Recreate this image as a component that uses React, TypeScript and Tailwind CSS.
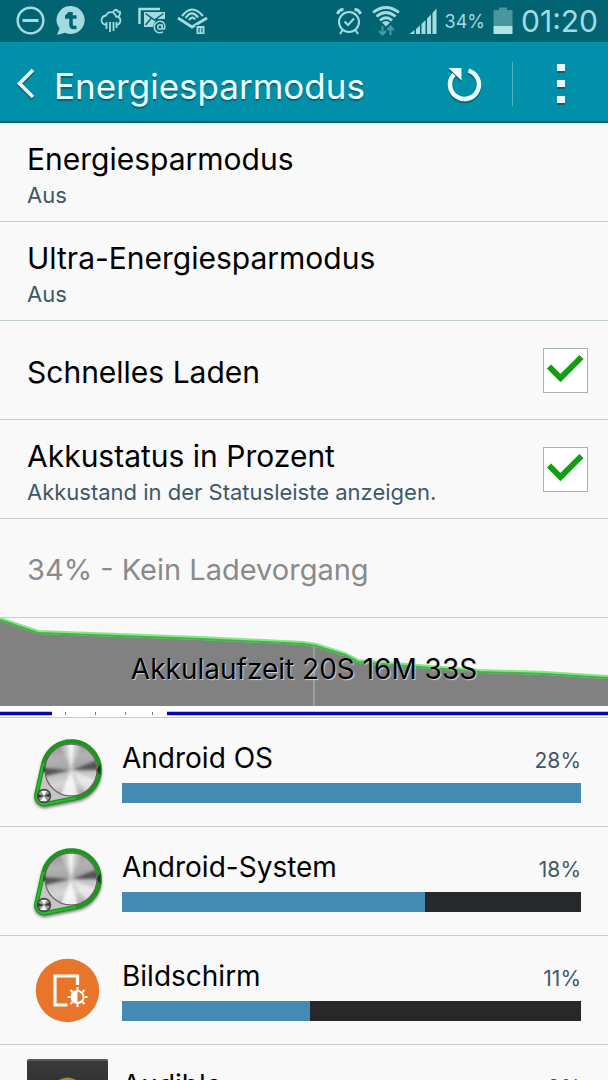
import React from 'react';

interface SettingRowProps {
  title: string;
  subtitle?: string;
  checkbox?: boolean;
}

const settings: SettingRowProps[] = [
  { title: 'Energiesparmodus', subtitle: 'Aus' },
  { title: 'Ultra-Energiesparmodus', subtitle: 'Aus' },
  { title: 'Schnelles Laden', checkbox: true },
  { title: 'Akkustatus in Prozent', subtitle: 'Akkustand in der Statusleiste anzeigen.', checkbox: true },
];

const SettingText: React.FC<SettingRowProps> = ({ title, subtitle }) => (
  <span className={subtitle ? 'flex flex-col pt-2.5' : 'flex flex-col pt-1'}>
    <span className="text-[30px] leading-9 text-black">{title}</span>
    {subtitle && <span className="text-[22px] leading-9 text-[#3d5867]">{subtitle}</span>}
  </span>
);

const SettingRow: React.FC<SettingRowProps> = ({ title, subtitle, checkbox }) => {
  const [checked, setChecked] = React.useState(true);
  const rowClass = 'flex w-full h-[98px] items-center justify-between pl-[27px] pr-5 text-left';

  return (
    <li className="border-b border-[#c3ced3]">
      {checkbox ? (
        <label className={rowClass}>
          <SettingText title={title} subtitle={subtitle} />
          <span className="grid shrink-0">
            <input
              type="checkbox"
              checked={checked}
              onChange={() => setChecked(!checked)}
              className="[grid-area:1/1] appearance-none w-[45px] h-[45px] bg-white border border-[#a5b3b8]"
            />
            {checked && (
              <svg viewBox="0 0 45 45" className="[grid-area:1/1] w-[45px] h-[45px] pointer-events-none">
                <path d="M6 18.500 L17.500 30 L38.500 9" fill="none" stroke="#12a012" strokeWidth="6" />
              </svg>
            )}
          </span>
        </label>
      ) : (
        <button type="button" className={rowClass}>
          <SettingText title={title} subtitle={subtitle} />
        </button>
      )}
    </li>
  );
};

const SystemIcon: React.FC = () => (
  <svg viewBox="0 0 81 81" className="w-full">
    <defs>
      <linearGradient id="metal" x1="0" y1="0" x2="0.15" y2="1">
        <stop offset="0" stopColor="#8f8f8f" />
        <stop offset="0.3" stopColor="#b2b2b2" />
        <stop offset="0.48" stopColor="#a8a8a8" />
        <stop offset="0.55" stopColor="#b8b8b8" />
        <stop offset="0.8" stopColor="#d6d6d6" />
        <stop offset="1" stopColor="#b5b5b5" />
      </linearGradient>
      <filter id="soft" x="-30%" y="-30%" width="160%" height="160%">
        <feGaussianBlur stdDeviation="1.8" />
      </filter>
      <clipPath id="disc">
        <circle cx="44" cy="38" r="25.500" />
      </clipPath>
    </defs>
    <path
      d="M16.500 31 A28.500 28.500 0 1 1 49 66 L19 72 A8 8 0 0 1 9.500 62.500 Z"
      transform="translate(0 2)"
      fill="#555"
      stroke="#555"
      strokeWidth="4"
      opacity="0.8"
      filter="url(#soft)"
    />
    <path
      d="M16.500 31 A28.500 28.500 0 1 1 49 66 L19 72 A8 8 0 0 1 9.500 62.500 Z"
      fill="#c4c6c4"
      stroke="#1c961f"
      strokeWidth="4.500"
      strokeLinejoin="round"
    />
    <path
      d="M16.500 31 A28.500 28.500 0 0 0 16.500 31 L9.500 62.500 A8 8 0 0 0 19 72 L49 66"
      fill="none"
      stroke="#2bb930"
      strokeWidth="2"
      strokeLinejoin="round"
    />
    <circle cx="44" cy="38" r="26" fill="url(#metal)" />
    <g clipPath="url(#disc)">
      <g filter="url(#soft)">
        <path d="M44 38 L32 8 L56 8 Z" fill="#dedede" opacity="0.6" />
        <path d="M44 38 L40 8 L48 8 Z" fill="#fff" opacity="0.8" />
        <path d="M44 38 L14 36 L14 45 Z" fill="#333" opacity="0.75" />
        <path d="M44 38 L74 27 L74 38 Z" fill="#333" opacity="0.75" />
        <path d="M44 38 L32 68 L52 68 Z" fill="#fff" opacity="0.8" />
        <path d="M44 38 L72 50 L62 64 Z" fill="#fff" opacity="0.5" />
      </g>
    </g>
    <path d="M16.500 34 V41 L19.500 38 Z M73.500 32 V43 L69 38 Z" fill="#143d16" />
    <circle cx="44" cy="38" r="26" fill="none" stroke="#6a5a62" strokeWidth="1.200" />
    <circle cx="17" cy="64" r="6.500" fill="#9a9a9a" stroke="#4a4a4a" strokeWidth="1.500" />
    <path d="M17 64 L14 59 L20 59 Z M17 64 L13 69 L20 69 Z" fill="#f4f4f4" />
    <path d="M17 64 L11 62 V66 Z M17 64 L23 61 V65 Z" fill="#3a3a3a" />
  </svg>
);

const DisplayIcon: React.FC = () => (
  <svg viewBox="0 0 81 81" className="w-full" fill="none" stroke="#fff">
    <circle cx="40.500" cy="40.500" r="31.700" fill="#e8752a" stroke="none" />
    <path d="M40.500 55 H28 V26 H50.500 V35" strokeWidth="3.200" />
    <circle cx="50.500" cy="47" r="6" strokeWidth="2" />
    <path d="M50.500 41 a6 6 0 0 0 0 12 Z" fill="#fff" stroke="none" />
    <path
      d="M50.500 37 V40 M50.500 54 V57 M40.500 47 H43.500 M57.500 47 H60.500 M43.500 40 L45.500 42 M55.500 52 L57.500 54 M57.500 40 L55.500 42 M43.500 54 L45.500 52"
      strokeWidth="2"
    />
  </svg>
);

const AudibleIcon: React.FC = () => (
  <svg viewBox="0 0 81 81" className="w-full">
    <defs>
      <linearGradient id="audible" x1="0" y1="0" x2="0" y2="1">
        <stop offset="0" stopColor="#3c3c3c" />
        <stop offset="1" stopColor="#1c1c1c" />
      </linearGradient>
    </defs>
    <rect width="81" height="81" rx="2" fill="url(#audible)" />
    <path d="M0.500 1 H80.500" stroke="#777" strokeWidth="1" />
    <path d="M22 32 Q40.500 8 59 32" fill="none" stroke="#a08a3c" strokeWidth="3" />
    <path d="M12 40 L40.500 58 L69 40" fill="none" stroke="#c9c9c9" strokeWidth="4" />
  </svg>
);

const apps = [
  { name: 'Android OS', percent: 28, bar: 100, icon: <SystemIcon /> },
  { name: 'Android-System', percent: 18, bar: 66, icon: <SystemIcon /> },
  { name: 'Bildschirm', percent: 11, bar: 41, icon: <DisplayIcon /> },
  { name: 'Audible', percent: 9, bar: 33, icon: <AudibleIcon /> },
];

const StatusBar: React.FC = () => (
  <div className="flex h-[42px] shrink-0 items-center justify-between bg-[#026472] pl-4 pr-2.5 text-[#a3dbe0]">
    <div className="flex gap-2.5">
      <svg viewBox="0 0 30 30" className="w-[30px]" fill="none" stroke="currentColor" strokeWidth="2.500">
        <circle cx="14.500" cy="14.500" r="12.800" />
        <path d="M6.500 14.500 H22.500" strokeWidth="3" />
      </svg>
      <svg viewBox="0 0 30 30" className="w-[30px]" fill="currentColor">
        <path d="M15 0 a14 14 0 1 1 -6 26.800 L1 29 L3.500 22.500 A14 14 0 0 1 15 0 Z" />
        <path
          d="M15 6 V18.500 Q15 21.500 18 21.500 H20.500 M9 11 H20.500 M14 7 L10 11"
          fill="none"
          stroke="#026472"
          strokeWidth="3.500"
        />
      </svg>
      <svg viewBox="0 0 30 30" className="w-[30px]" fill="none" stroke="currentColor" strokeWidth="1.800">
        <path d="M10 19 Q5.500 18 5.500 14 Q6 10 10 9.500 Q12 5 17 6.500 Q19.500 8 20 10.500 Q24.500 11 24.500 14.500 Q24 18.500 20.500 19" />
        <path d="M17 6 Q19 3 21 4 Q21 6 24 6 Q24.500 9 22 11" />
        <path d="M10.500 16 V23 M14 16 V26 M17.500 16 V25 M20.500 16 V22" />
      </svg>
      <svg viewBox="0 0 30 30" className="w-[30px]" fill="none" stroke="currentColor">
        <path d="M3.500 18 V3 H24" strokeWidth="2.500" />
        <path d="M8 6 H29 V13 H20 L17 21 H8 Z" fill="currentColor" stroke="none" />
        <path d="M9.500 7.500 L18.500 14 L27.500 7.500 M9.500 19 L15 12.500" stroke="#026472" strokeWidth="1.500" />
        <circle cx="24" cy="21" r="6.500" fill="#026472" stroke="none" />
        <circle cx="24" cy="21" r="2.300" strokeWidth="1.500" />
        <path d="M26.300 18.500 V22 Q27 24 28.500 22.500 Q30 18 26.500 15.800 Q22 14 19 18 Q17 23 20.500 25.800 Q23.500 27.500 27 26" strokeWidth="1.500" />
      </svg>
      <svg viewBox="0 0 32 30" className="w-8" fill="none" stroke="currentColor" strokeWidth="2.200">
        <path d="M2 12 L16 21 L31 12" strokeWidth="2.800" />
        <path d="M6 10 Q16 -3 27 10" />
        <path d="M9.500 12 Q16 3 22 11.500" />
        <path d="M13 14 Q16.500 9.500 19 13.500" />
        <rect x="20" y="19.500" width="9" height="9" fill="currentColor" stroke="#026472" strokeWidth="1" />
        <path d="M23 22 V26.500 M26 22 V26.500" stroke="#026472" strokeWidth="1.200" />
      </svg>
    </div>
    <div className="flex items-center gap-2">
      <svg viewBox="0 0 28 28" className="w-7" fill="none" stroke="currentColor" strokeWidth="2">
        <circle cx="14" cy="15" r="10" />
        <path d="M9.500 14.500 L13 18 L19 11.500" />
        <path d="M2.500 7 Q4 2.500 8.500 2.500 M25.500 7 Q24 2.500 19.500 2.500" strokeWidth="3" />
        <path d="M7.500 23 L5 27 M20.500 23 L23 27" />
      </svg>
      <svg viewBox="0 0 30 30" className="w-[30px]" fill="none" stroke="currentColor" strokeWidth="2.800">
        <path d="M2 6.500 Q15 -3.500 28 6.500" />
        <path d="M5.500 10.500 Q15 2.500 24.500 10.500" />
        <path d="M9 14.500 Q15 9 21 14.500" />
        <path d="M11 16.500 Q15 13.500 19 16.500 L15 20.500 Z" fill="currentColor" stroke="none" />
        <path d="M11.500 20 V28 M8 25 L11.500 28.500 L15 25 M19.500 29 V21 M16.300 24 L19.500 20.500 L22.700 24" stroke="#4c98a1" strokeWidth="2" />
      </svg>
      <svg viewBox="0 0 28 28" className="w-7" fill="currentColor">
        <path d="M0.500 27 L5.500 23 V27 Z M7 22 L11 18.500 V27 H7 Z M12.500 17 L16.500 13 V27 H12.500 Z M18 11.500 L22 7.500 V27 H18 Z M23.500 6 L27.500 1.500 V27 H23.500 Z" />
      </svg>
      <span className="text-[18px]">34%</span>
      <svg viewBox="0 0 20 28" className="w-5">
        <path d="M0.500 3 H6 V0.500 H14 V3 H19.500 V19 H0.500 Z" fill="#4a969e" />
        <path d="M0.500 19 H19.500 V27 H0.500 Z" fill="#b4e2e5" />
      </svg>
      <span className="text-[30px] leading-10">01:20</span>
    </div>
  </div>
);

const Header: React.FC = () => (
  <header className="flex h-[81px] shrink-0 items-center border-b-2 border-[#075a68] bg-[#0190aa] pt-1 text-[#eefcfd]">
    <button type="button" aria-label="Zurück" className="flex h-full items-center pl-4">
      <svg viewBox="0 0 20 32" className="w-5 drop-shadow-[0_2px_0_#056678]" fill="none" stroke="currentColor" strokeWidth="3.500">
        <path d="M17 2 L3.500 15.500 L17 29" />
      </svg>
    </button>
    <h1 className="grow pl-[18px] pt-1 text-[35px] leading-10 [text-shadow:0_2px_1px_#056678]">Energiesparmodus</h1>
    <button type="button" aria-label="Aktualisieren" className="flex h-full w-24 items-center justify-center">
      <svg viewBox="0 0 36 36" className="w-9 drop-shadow-[0_2px_0_#056678]">
        <path d="M22.500 4.600 A14.500 14.500 0 1 1 8 8.500" fill="none" stroke="currentColor" strokeWidth="4.500" />
        <path d="M2.500 2 H15.500 V14.500 Z" fill="currentColor" />
      </svg>
    </button>
    <span className="h-[44px] w-px bg-[#4db3c4]" />
    <button type="button" aria-label="Menü" className="flex h-full w-[95px] items-center justify-center">
      <svg viewBox="0 0 8 40" className="w-2 drop-shadow-[0_2px_0_#056678]" fill="currentColor">
        <path d="M0 0 H8 V7 H0 Z M0 16 H8 V23 H0 Z M0 32 H8 V39 H0 Z" />
      </svg>
    </button>
  </header>
);

const BatteryChart: React.FC = () => (
  <section className="relative border-b border-[#c3ced3]">
    <svg viewBox="0 0 608 99" preserveAspectRatio="none" className="block h-[99px] w-full">
      <path d="M0 1 L38 14 L200 20 L304 25 L316 27 L345 36 L358 43 L480 53 L545 55 L608 59 V88 H0 Z" fill="#818181" />
      <path d="M314 27 V88" stroke="#b9b9b9" />
      <path
        d="M0 1 L38 14 L200 20 L304 25 L316 27 L345 36 L358 43 L480 53 L545 55 L608 59"
        fill="none"
        stroke="#8be58b"
        strokeWidth="4"
      />
      <path
        d="M0 2 L38 15 L200 21 L304 26 L316 28 L345 37 L358 44 L480 54 L545 56 L608 60"
        fill="none"
        stroke="#3fb544"
        strokeWidth="2"
      />
      <path d="M0 88 H608 V99 H0 Z" fill="#fff" />
      <path d="M0 95.500 H52 M167 95.500 H608" stroke="#0505b4" strokeWidth="3.500" />
      <path d="M65.500 94 V97 M95.500 94 V97 M125.500 94 V97 M152.500 94 V97" stroke="#777" />
    </svg>
    <p className="absolute inset-x-0 top-[33px] text-center text-[28px] leading-9 text-black [text-shadow:1px_1px_1px_#d8d8d8]">
      Akkulaufzeit 20S 16M 33S
    </p>
  </section>
);

export default function App() {
  return (
    <div className="flex h-screen flex-col overflow-hidden bg-[#f9f9f9] font-['Inter',sans-serif]">
      <StatusBar />
      <Header />
      <main className="min-h-0 grow overflow-hidden">
        <ul>
          {settings.map((setting) => (
            <SettingRow key={setting.title} {...setting} />
          ))}
        </ul>
        <div className="flex h-[99px] items-center border-b border-[#c3ced3] px-[27px]">
          <p className="pt-1 text-[29px] leading-9 text-[#8a8a8a]">34% - Kein Ladevorgang</p>
        </div>
        <BatteryChart />
        <ul>
          {apps.map((app) => (
            <li key={app.name} className="border-b border-[#c3ced3]">
              <button type="button" className="flex h-[108px] w-full gap-3.5 px-[27px] pt-3.5 text-left">
                <span className="h-[81px] w-[81px] shrink-0">{app.icon}</span>
                <span className="flex grow flex-col gap-1 pt-2">
                  <span className="flex items-baseline justify-between leading-9">
                    <span className="text-[28px] text-black">{app.name}</span>
                    <span className="text-[21px] text-[#3d5867]">{app.percent}%</span>
                  </span>
                  <span className="block h-5 w-full bg-[#272829]">
                    <span className="block h-full bg-[#448bb4]" style={{ width: `${app.bar}%` }} />
                  </span>
                </span>
              </button>
            </li>
          ))}
        </ul>
      </main>
    </div>
  );
}
